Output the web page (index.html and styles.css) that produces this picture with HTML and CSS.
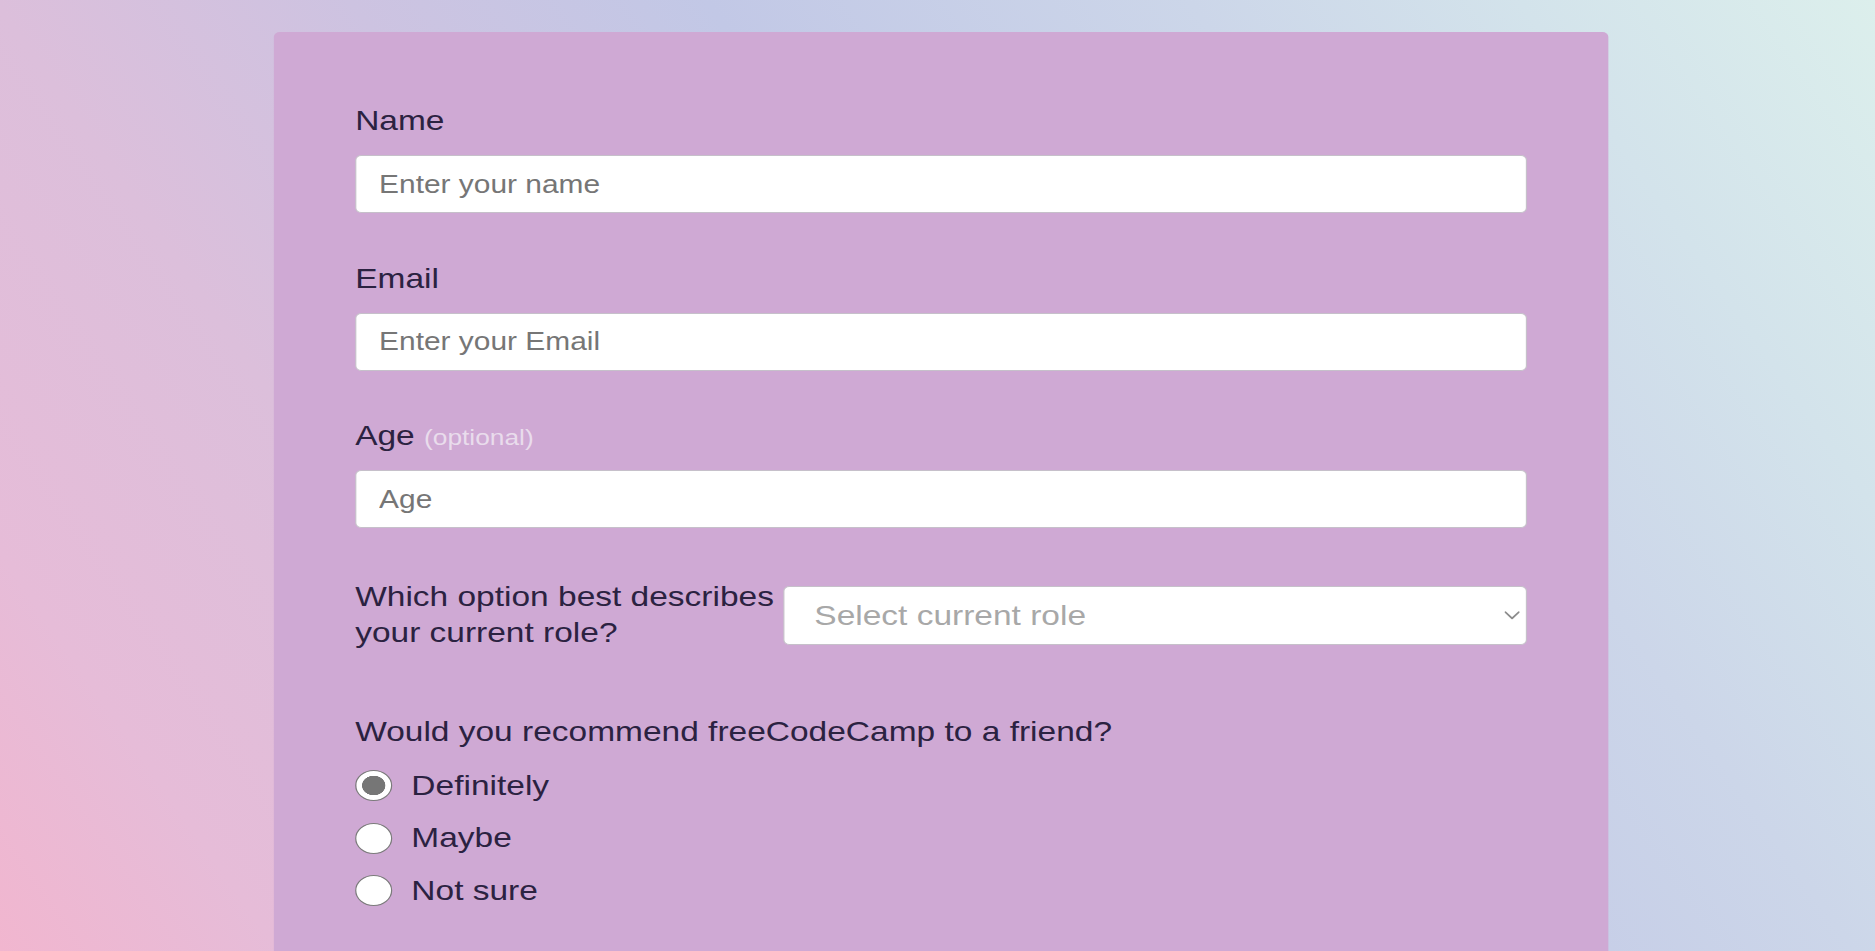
FILE: index.html
```html
<!DOCTYPE html>
<html lang="en">
<head>
<meta charset="utf-8">
<title>Survey Form</title>
<link rel="stylesheet" href="styles.css">
</head>
<body>
<div class="stage">
  <main class="card">
    <form class="survey">
      <div class="field">
        <label class="label" for="name">Name</label>
        <input class="input" id="name" type="text" placeholder="Enter your name">
      </div>
      <div class="field">
        <label class="label" for="email">Email</label>
        <input class="input" id="email" type="email" placeholder="Enter your Email">
      </div>
      <div class="field">
        <label class="label" for="age">Age <span class="optional">(optional)</span></label>
        <input class="input" id="age" type="number" placeholder="Age">
      </div>
      <div class="field-row">
        <label class="row-label" for="role">Which option best describes your current role?</label>
        <div class="select-wrap">
          <select class="select" id="role">
            <option>Select current role</option>
            <option>Student</option>
            <option>Full Time Job</option>
            <option>Full Time Learner</option>
            <option>Prefer not to say</option>
            <option>Other</option>
          </select>
          <svg class="chevron" width="13" height="9" viewBox="0 0 13 9" aria-hidden="true"><polyline points="1,1.2 6.5,7.4 12,1.2" fill="none" stroke="#8c8c8c" stroke-width="1.6" stroke-linecap="round" stroke-linejoin="round"/></svg>
        </div>
      </div>
      <fieldset class="group">
        <legend class="question">Would you recommend freeCodeCamp to a friend?</legend>
        <label class="choice"><input class="radio" type="radio" name="rec" checked> Definitely</label>
        <label class="choice"><input class="radio" type="radio" name="rec"> Maybe</label>
        <label class="choice"><input class="radio" type="radio" name="rec"> Not sure</label>
      </fieldset>
    </form>
  </main>
</div>
</body>
</html>
```

FILE: styles.css
```css
html, body {
  margin: 0;
  padding: 0;
}

body {
  height: 100vh;
  overflow: hidden;
  font-family: "Liberation Sans", Arial, sans-serif;
  color: #2b2241;
  background: linear-gradient(55deg, #f1b6cf 0%, #e6bcd8 11%, #dcbfdb 26%, #cdc3e1 40%, #c2c8e6 54%, #ccd6e9 73%, #d3e3eb 86%, #dcefec 100%);
}

.stage {
  width: 1568px;
  transform: scaleX(1.1958);
  transform-origin: 0 0;
}

.card {
  box-sizing: border-box;
  width: 1116px;
  min-height: 1000px;
  margin: 32px 0 0 229px;
  padding: 73px 68px 0;
  background: #cfa9d4;
  border-radius: 5px;
}

.survey {
  display: flex;
  flex-direction: column;
}

.field {
  display: flex;
  flex-direction: column;
  margin-bottom: 49.5px;
}

.label {
  font-size: 28px;
  line-height: 32px;
  margin-bottom: 18px;
}

.optional {
  font-size: 22px;
  line-height: 1;
  color: #e9dcec;
}

.input {
  box-sizing: border-box;
  width: 100%;
  height: 58px;
  margin: 0;
  padding: 0 19px;
  border: 1px solid #c6c0ca;
  border-radius: 5px;
  background: #fff;
  font-family: "Liberation Sans", Arial, sans-serif;
  font-size: 25px;
  color: #333;
  outline: none;
}

.input::placeholder {
  color: #767676;
}

.field-row {
  display: flex;
  align-items: center;
  gap: 6px;
  margin-top: 1.5px;
}

.row-label {
  flex: 0 0 352px;
  font-size: 28px;
  line-height: 36px;
}

.select-wrap {
  position: relative;
  flex: 1;
}

.select {
  box-sizing: border-box;
  width: 100%;
  height: 59px;
  margin: 0;
  padding: 0 30px 0 25px;
  appearance: none;
  -webkit-appearance: none;
  border: 1px solid #c6c0ca;
  border-radius: 5px;
  background: #fff;
  font-family: "Liberation Sans", Arial, sans-serif;
  font-size: 28px;
  color: #a8a8a8;
  outline: none;
}

.chevron {
  position: absolute;
  right: 6.5px;
  top: 25px;
  pointer-events: none;
}

.group {
  margin: 65px 0 0;
  padding: 0;
  border: 0;
  min-width: 0;
}

.question {
  padding: 0;
  font-size: 28px;
  line-height: 32px;
  margin-bottom: 11.25px;
}

.choice {
  display: flex;
  align-items: center;
  height: 52.5px;
  font-size: 28px;
}

.radio {
  appearance: none;
  -webkit-appearance: none;
  box-sizing: border-box;
  width: 31px;
  height: 31px;
  margin: 0 16px 0 0;
  border: 1.6px solid #7b7b7b;
  border-radius: 50%;
  background: #fff;
}

.radio:checked {
  background: radial-gradient(circle, #767676 0 9.5px, #fff 10px);
}
```
